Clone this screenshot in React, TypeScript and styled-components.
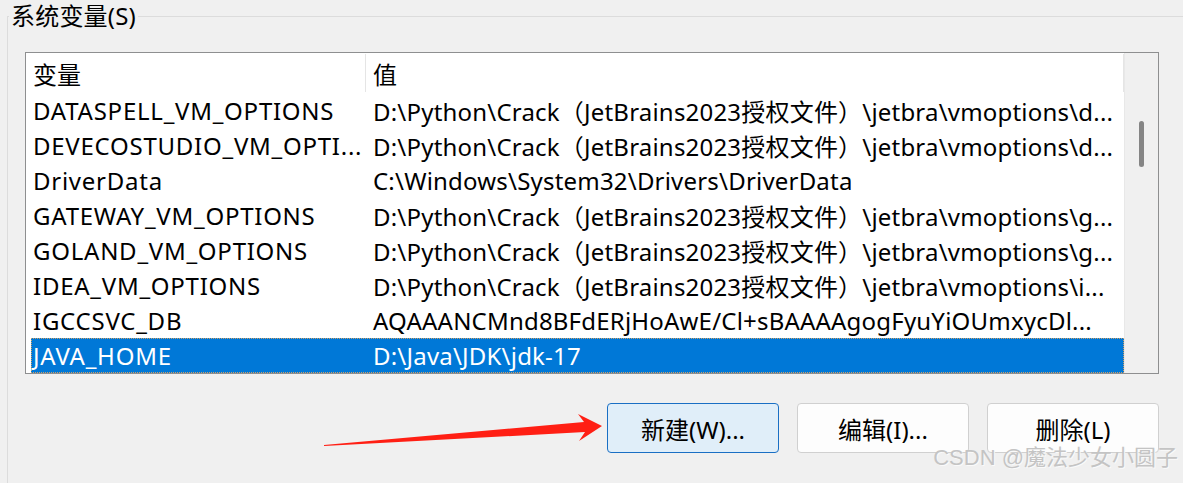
import React from "react";
import styled, { createGlobalStyle } from "styled-components";

const Global = createGlobalStyle`
  html, body { margin: 0; padding: 0; background: #f0f0f0; }
  body { font-family: "Noto Sans", "Noto Sans CJK SC", sans-serif; }
`;

const FONT = `"Noto Sans", "Noto Sans CJK SC", sans-serif`;

const Page = styled.div`
  position: relative;
  width: 1183px;
  height: 483px;
  overflow: hidden;
  background: #f0f0f0;
  padding-top: 16px;
  padding-left: 7px;
  box-sizing: border-box;
  font-family: ${FONT};
`;

const Group = styled.div`
  position: relative;
  width: 1200px;
  height: 500px;
  border-top: 1px solid #dcdcdc;
  border-left: 1px solid #dcdcdc;
  padding-left: 17px;
  box-sizing: border-box;
`;

const GroupLabel = styled.div`
  position: absolute;
  top: -15px;
  left: 1px;
  padding: 0 2px;
  background: #f0f0f0;
  font-size: 24px;
  line-height: 28px;
  letter-spacing: 0.2px;
  color: #000;
`;

const ListBox = styled.div`
  margin-top: 35px;
  width: 1134px;
  height: 322px;
  border: 1px solid #8e8f90;
  box-sizing: border-box;
  background: #fff;
  display: flex;
`;

const ListContent = styled.div`
  flex: 1;
  display: flex;
  flex-direction: column;
  min-width: 0;
`;

const Header = styled.div`
  height: 40px;
  display: grid;
  grid-template-columns: 340px 1fr;
  align-items: stretch;
`;

const HeaderCell = styled.div<{ $sep?: boolean }>`
  display: flex;
  align-items: center;
  padding-left: 7px;
  font-size: 24px;
  color: #000;
  border-right: 1px solid ${(p) => (p.$sep ? "#e5e5e5" : "transparent")};
  margin: 1px 0;
`;

const Row = styled.div<{ $selected?: boolean }>`
  height: 35px;
  margin-left: 5px;
  display: grid;
  grid-template-columns: 335px 1fr;
  align-items: center;
  box-sizing: border-box;
  background: ${(p) => (p.$selected ? "#0078d7" : "transparent")};
  color: ${(p) => (p.$selected ? "#fff" : "#000")};
  outline: ${(p) => (p.$selected ? "1px dotted rgba(255, 170, 80, 0.8)" : "none")};
  outline-offset: -1px;
`;

const Cell = styled.div<{ $first?: boolean }>`
  padding-left: ${(p) => (p.$first ? "2px" : "7px")};
  padding-right: 4px;
  font-size: 24px;
  letter-spacing: ${(p) => (p.$first ? "0.75px" : "0.2px")};
  white-space: nowrap;
  overflow: hidden;
`;

const ScrollTrack = styled.div`
  width: 34px;
  background: #f0f0f0;
  border-left: 1px solid #e8e8e8;
  position: relative;
  display: flex;
  justify-content: center;
  padding-top: 68px;
  box-sizing: border-box;
`;

const Thumb = styled.div`
  width: 5px;
  height: 46px;
  border-radius: 3px;
  background: #858585;
`;

const Buttons = styled.div`
  width: 1134px;
  margin-top: 29px;
  display: flex;
  justify-content: flex-end;
  gap: 18px;
`;

const Button = styled.button<{ $primary?: boolean }>`
  width: 172px;
  height: 50px;
  box-sizing: border-box;
  border-radius: 4px;
  border: 1px solid ${(p) => (p.$primary ? "#1a6fc4" : "#d0d0d0")};
  background: ${(p) => (p.$primary ? "#e0eef9" : "#fdfdfd")};
  font-family: ${FONT};
  font-size: 24px;
  color: #000;
  padding: 0;
`;

const Watermark = styled.div`
  position: absolute;
  right: 5px;
  bottom: 12px;
  font-family: "Liberation Sans", "Noto Sans CJK SC", sans-serif;
  font-size: 22px;
  color: #c4c4c4;
  text-shadow: 1px 1px 0 #fafafa;
  pointer-events: none;
`;

const ArrowSvg = styled.svg`
  position: absolute;
  left: 0;
  top: 0;
  pointer-events: none;
`;

const P = "D:\\Python\\Crack（JetBrains2023授权文件）\\jetbra\\vmoptions\\";

const rows: [string, string][] = [
  ["DATASPELL_VM_OPTIONS", P + "d..."],
  ["DEVECOSTUDIO_VM_OPTI...", P + "d..."],
  ["DriverData", "C:\\Windows\\System32\\Drivers\\DriverData"],
  ["GATEWAY_VM_OPTIONS", P + "g..."],
  ["GOLAND_VM_OPTIONS", P + "g..."],
  ["IDEA_VM_OPTIONS", P + "i..."],
  ["IGCCSVC_DB", "AQAAANCMnd8BFdERjHoAwE/Cl+sBAAAAgogFyuYiOUmxycDl..."],
  ["JAVA_HOME", "D:\\Java\\JDK\\jdk-17"],
];

export default function App() {
  return (
    <Page>
      <Global />
      <Group>
        <GroupLabel>系统变量(S)</GroupLabel>
        <ListBox>
          <ListContent>
            <Header>
              <HeaderCell $sep>变量</HeaderCell>
              <HeaderCell $sep>值</HeaderCell>
            </Header>
            {rows.map(([k, v], i) => (
              <Row key={k} $selected={i === rows.length - 1}>
                <Cell $first>{k}</Cell>
                <Cell>{v}</Cell>
              </Row>
            ))}
          </ListContent>
          <ScrollTrack>
            <Thumb />
          </ScrollTrack>
        </ListBox>
        <Buttons>
          <Button $primary>新建(W)...</Button>
          <Button>编辑(I)...</Button>
          <Button>删除(L)</Button>
        </Buttons>
      </Group>
      <ArrowSvg width="1183" height="483" viewBox="0 0 1183 483">
        <polygon
          points="324,445 584,422 578,414 602,426 579,441 585,432 324,446"
          fill="#ff1f14"
        />
      </ArrowSvg>
      <Watermark>CSDN @魔法少女小圆子</Watermark>
    </Page>
  );
}
